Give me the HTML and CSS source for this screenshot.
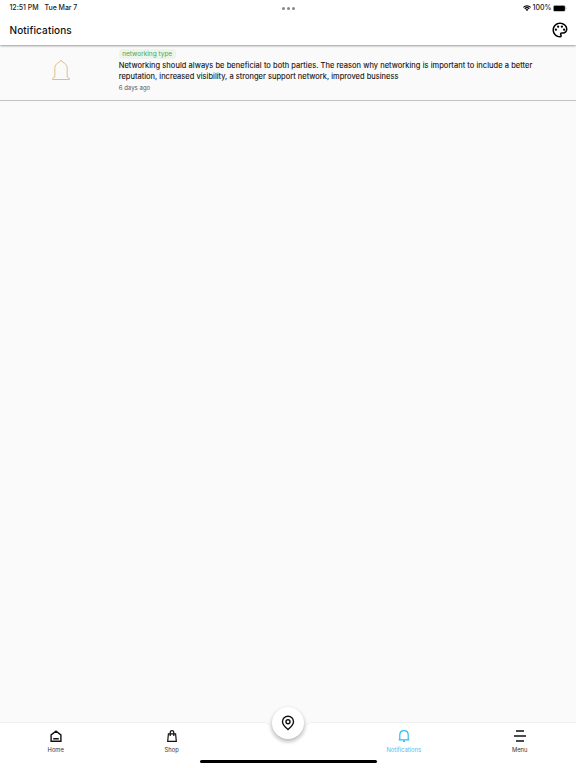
FILE: index.html
```html
<!DOCTYPE html>
<html lang="en">
<head>
<meta charset="utf-8">
<title>Notifications</title>
<link rel="stylesheet" href="styles.css">
</head>
<body>
<div class="app">
  <header class="top">
    <div class="status">
      <div class="clock"><span class="time">12:51 PM</span><span class="date">Tue Mar 7</span></div>
      <div class="dots"><i></i><i></i><i></i></div>
      <div class="system">
        <svg class="wifi" viewBox="0 0 16 12"><path d="M0 4a11.3 11.3 0 0 1 16 0l-1.5 1.6a9.2 9.2 0 0 0-13 0zM2.6 6.7a7.7 7.7 0 0 1 10.8 0l-1.6 1.6a5.4 5.4 0 0 0-7.6 0zM5.2 9.3a4 4 0 0 1 5.6 0L8 12z"/></svg>
        <span class="percent">100%</span>
        <svg class="battery" viewBox="0 0 14 7"><rect x=".3" y=".3" width="12" height="6.2" rx="1.8" fill="#fff" stroke="#888" stroke-width=".5"/><rect x=".7" y=".7" width="11.2" height="5.4" rx="1.2"/><path d="M13 2.3q1 1 0 2z" fill="#888"/></svg>
      </div>
    </div>
    <div class="titlebar">
      <h1>Notifications</h1>
      <svg class="palette" viewBox="0 0 24 24"><path d="M12 22C6.49 22 2 17.51 2 12S6.49 2 12 2s10 4.04 10 9c0 3.31-2.69 6-6 6h-1.77c-.28 0-.5.22-.5.5 0 .12.05.23.13.33.41.47.64 1.06.64 1.67A2.5 2.5 0 0 1 12 22zm0-18c-4.41 0-8 3.59-8 8s3.59 8 8 8c.28 0 .5-.22.5-.5a.54.54 0 0 0-.14-.35c-.41-.46-.63-1.05-.63-1.65a2.5 2.5 0 0 1 2.5-2.5H16c2.21 0 4-1.79 4-4 0-3.86-3.59-7-8-7z"/><circle cx="6.5" cy="11.5" r="1.5"/><circle cx="9.5" cy="7.5" r="1.5"/><circle cx="14.5" cy="7.5" r="1.5"/><circle cx="17.5" cy="11.5" r="1.5"/></svg>
    </div>
  </header>

  <main>
    <article class="notice">
      <div class="thumb">
        <svg viewBox="0 0 20 22"><path d="M3.8 18V8.8C3.8 6 6.2 4.1 8.4 3.1L10 1.2 11.6 3.1C13.8 4.1 16.2 6 16.2 8.8V18L18.5 19.4V20.5H1.5V19.4Z"/></svg>
      </div>
      <div class="content">
        <span class="tag">networking type</span>
        <p class="message"><span class="line first">Networking should always be beneficial to both parties. The reason why networking is important to include a better</span> <span class="line second">reputation, increased visibility, a stronger support network, improved business</span></p>
        <time>6 days ago</time>
      </div>
    </article>
  </main>

  <nav class="bottom">
    <svg class="surface" viewBox="0 0 576 46"><path d="M0 .5H264Q268 .5 269 3A19 19 0 0 0 307 3Q308 .5 312 .5H576V46H0Z" fill="#fff"/><path d="M0 .5H264Q268 .5 269 3M307 3Q308 .5 312 .5H576" fill="none" stroke="#f0f0f0"/></svg>
    <a class="tab home"><svg viewBox="0 0 12 12"><path d="M1.1 11.2V4.9L6 1.2 10.9 4.9V11.2ZM3.2 8.8H8.8"/></svg><span>Home</span></a>
    <a class="tab shop"><svg viewBox="0 0 12 12"><path d="M2.4 3.8H9.6L10.3 11.3H1.7ZM4.2 6V2.7Q4.2 .7 6 .7T7.8 2.7V6"/></svg><span>Shop</span></a>
    <div class="gap"></div>
    <a class="tab alerts"><svg viewBox="0 0 12 12"><path d="M.7 9.8H11.3M1.8 9.6V5Q1.8 .7 6 .7T10.2 5V9.6M5 11.4H7"/></svg><span>Notifications</span></a>
    <a class="tab menu"><svg viewBox="0 0 12 12"><path d="M2 1H10M0 6H12M2 11H10"/></svg><span>Menu</span></a>
    <button class="fab" aria-label="Location"><svg viewBox="0 0 14 16"><path d="M7 14.5C4.8 12.5 1.5 10 1.5 6.7A5.5 5.5 0 0 1 12.5 6.7C12.5 10 9.2 12.5 7 14.5Z"/><circle cx="7" cy="6.7" r="2"/></svg></button>
    <div class="handle"></div>
  </nav>
</div>
</body>
</html>
```
FILE: styles.css
```css
* { box-sizing: border-box; }
body { margin: 0; background: #fafafa; color: #111; font-family: Inter, "Liberation Sans", sans-serif; }
.app { height: 768px; display: flex; flex-direction: column; overflow: hidden; }
svg { display: block; }
.top { height: 45px; flex: none; background: #fff; box-shadow: 0 1px 2px rgba(0, 0, 0, .38); z-index: 1; }
.status { height: 14px; display: grid; grid-template-columns: 1fr auto 1fr; align-items: center; padding: 0 9px 0 9.5px; font-size: 7px; font-weight: 500; line-height: 16px; white-space: nowrap; color: #222; }
.clock { display: flex; gap: 6px; }
.time, .date { letter-spacing: -.04px; }
.dots { display: flex; gap: 2px; }
.dots i { width: 3px; height: 3px; border-radius: 50%; background: #888; }
.system { display: flex; align-items: center; justify-content: flex-end; gap: 1.5px; }
.wifi { width: 8px; height: 6px; }
.battery { width: 14px; height: 7px; }
.titlebar { height: 31px; display: flex; align-items: center; justify-content: space-between; padding: 0 7px 0 9.5px; }
h1 { margin: 0; font-size: 10px; font-weight: 500; letter-spacing: .12px; }
.palette { width: 18px; height: 18px; }
main { flex: 1; }
.notice { height: 56px; display: flex; border-bottom: 1px solid #c2c2c2; }
.thumb { width: 118.7px; padding: 14px 0 0 51px; }
.thumb svg { width: 20px; height: 22px; fill: none; stroke: #dcc084; stroke-width: 1; }
.content { padding-top: 4px; white-space: nowrap; }
.tag { display: block; width: 57px; height: 10px; border-radius: 4px; background: #edf3ed; color: #45ad4b; font-size: 6.5px; line-height: 10px; text-align: center; }
.message { margin: 1px 0 0; font-size: 7.5px; line-height: 11px; color: #111; -webkit-text-stroke: .1px #111; }
.line { display: block; }
.first { letter-spacing: .052px; }
.second { letter-spacing: .028px; }
time { display: block; margin-top: 2px; font-size: 6px; line-height: 8px; letter-spacing: .03px; color: #555; }
.bottom { position: relative; height: 46px; flex: none; display: flex; }
.surface { position: absolute; inset: 0; width: 576px; height: 46px; }
.tab { position: relative; flex: 0 0 116px; display: flex; flex-direction: column; align-items: center; padding-top: 8px; font-size: 5.8px; line-height: 8px; color: #333; }
.tab svg { width: 12px; height: 12px; margin-bottom: 4px; fill: none; stroke: #111; stroke-width: 1.4; overflow: visible; }
.home { margin-left: -2.3px; }
.gap { flex: 0 0 116px; }
.shop svg { stroke-width: 1.2; }
.alerts { color: #43c4f3; }
.alerts svg { stroke: #2bbdf0; stroke-width: 1.2; }
.menu svg { stroke-width: 1.6; }
.fab { position: absolute; left: 272px; top: -15px; width: 32px; height: 32px; border: 0; padding: 0; border-radius: 50%; background: #fff; box-shadow: 0 2px 4px rgba(0, 0, 0, .3); display: grid; place-items: center; }
.fab svg { width: 14px; height: 16px; fill: none; stroke: #111; stroke-width: 1.4; }
.handle { position: absolute; left: 199.5px; bottom: 5px; width: 177px; height: 3px; border-radius: 2px; background: #000; }
```
